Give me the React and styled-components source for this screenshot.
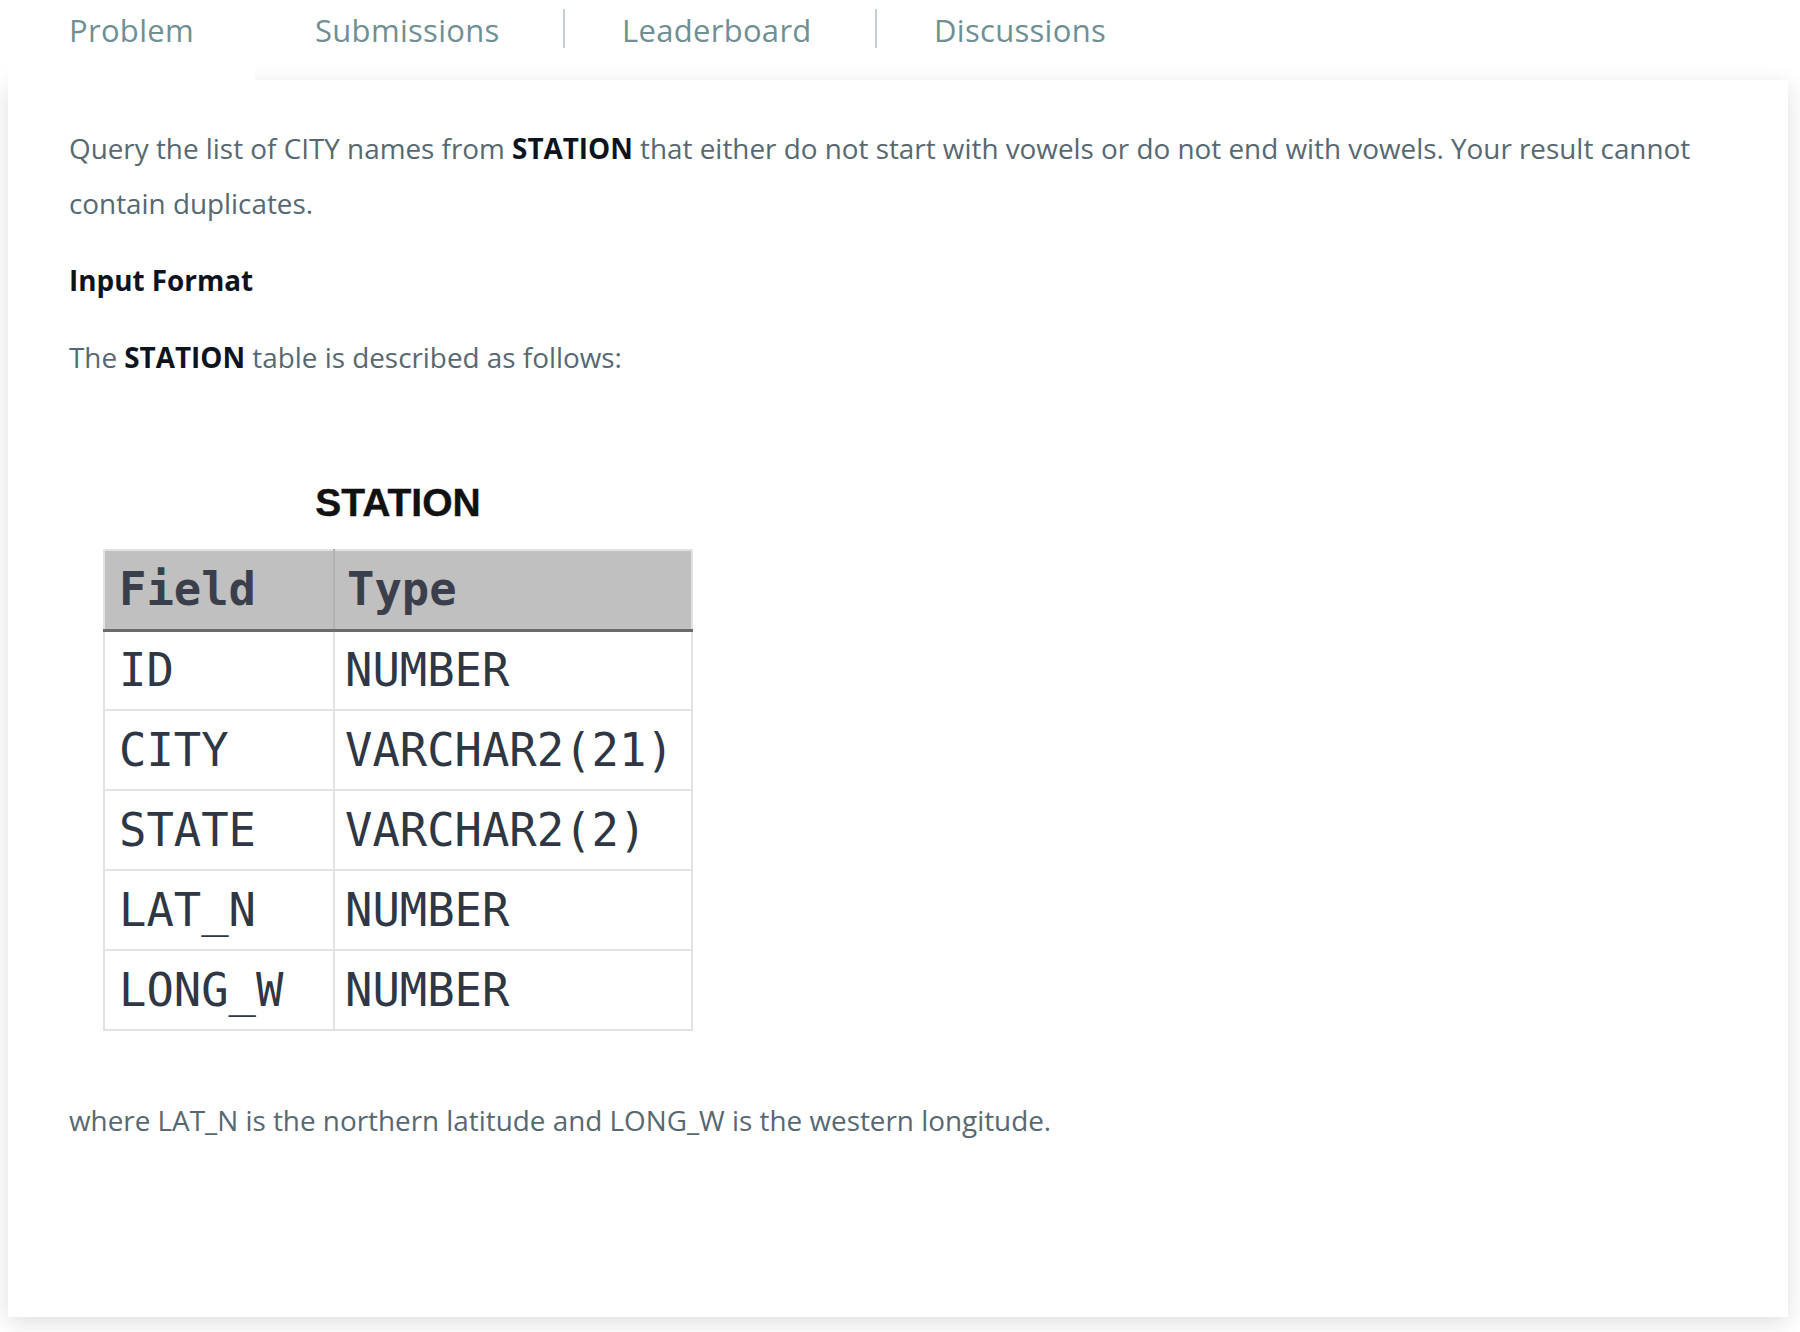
import React from "react";
import styled, { createGlobalStyle } from "styled-components";

const GlobalStyle = createGlobalStyle`
  html, body {
    margin: 0;
    padding: 0;
    background: #ffffff;
  }
  body {
    font-family: "Open Sans", "Noto Sans", sans-serif;
  }
`;

const Page = styled.div`
  width: 1780px;
  padding: 0 0 15px 8px;
`;

const TabBar = styled.div`
  display: flex;
  align-items: stretch;
  height: 80px;
`;

const Tab = styled.div`
  position: relative;
  z-index: ${props => (props.active ? 2 : 0)};
  display: flex;
  align-items: flex-start;
  padding: 9px 0 0 ${props => props.padLeft}px;
  width: ${props => props.width}px;
  box-sizing: border-box;
  background: ${props => (props.active ? "#ffffff" : "transparent")};
  font-size: 31px;
  color: #6f8f95;
  letter-spacing: 0.3px;
`;

const Divider = styled.span`
  align-self: flex-start;
  margin-top: 9px;
  width: 2px;
  height: 39px;
  background: #c2d0d4;
`;

const Card = styled.div`
  position: relative;
  z-index: 1;
  background: #ffffff;
  box-shadow: 0 6px 22px rgba(0, 0, 0, 0.13);
  padding: 41px 60px 0 61px;
  height: 1237px;
  box-sizing: border-box;
  color: #576871;
  font-size: 27.85px;
`;

const Para = styled.p`
  margin: ${props => props.top || 0}px 0 ${props => props.gap || 0}px;
  line-height: 55px;
  b {
    color: #0e141e;
    font-weight: 700;
  }
`;

const Heading = styled.h3`
  margin: 0 0 22px;
  font-size: 27.85px;
  line-height: 55px;
  font-weight: 700;
  color: #0e141e;
`;

const Figure = styled.div`
  display: flex;
  flex-direction: column;
  align-items: center;
  width: 590px;
  margin: 0 0 0 34px;
`;

const FigureTitle = styled.div`
  font-family: "Liberation Sans", Arial, sans-serif;
  font-weight: 700;
  font-size: 39px;
  line-height: 46px;
  color: #111111;
  margin-bottom: 23px;
  -webkit-text-stroke: 0.4px #111111;
`;

const Table = styled.table`
  width: 590px;
  table-layout: fixed;
  border-collapse: collapse;
  font-family: "DejaVu Sans Mono", "Liberation Mono", monospace;
  font-size: 45.5px;
  color: #2f3644;
  border: 2px solid #e2e2e2;
  th, td {
    box-sizing: border-box;
  }
`;

const HeadCell = styled.th`
  background: #bfc0bf;
  border-bottom: 3px solid #6b6b6b;
  border-left: 2px solid #b2b2b2;
  font-weight: 700;
  color: #3a3f4b;
  text-align: left;
  height: 80px;
  padding: 0 0 0 ${props => props.pad}px;
  width: ${props => (props.width ? `${props.width}px` : "auto")};
  &:first-child {
    border-left: none;
  }
`;

const Cell = styled.td`
  height: 80px;
  padding: 0 0 0 ${props => props.pad}px;
  border-top: 2px solid #e4e4e4;
  border-left: 2px solid #e4e4e4;
  white-space: nowrap;
  &:first-child {
    border-left: none;
  }
`;

const rows = [
  ["ID", "NUMBER"],
  ["CITY", "VARCHAR2(21)"],
  ["STATE", "VARCHAR2(2)"],
  ["LAT_N", "NUMBER"],
  ["LONG_W", "NUMBER"]
];

const tabs = [
  { label: "Problem", width: 247, pad: 61, active: true },
  { label: "Submissions", width: 308, pad: 60 },
  { label: "Leaderboard", width: 310, pad: 57 },
  { label: "Discussions", width: 340, pad: 57 }
];

export default function App() {
  return (
    <Page>
      <GlobalStyle />
      <TabBar>
        {tabs.map((t, i) => (
          <React.Fragment key={t.label}>
            {i > 1 && <Divider />}
            <Tab active={t.active} width={t.width} padLeft={t.pad}>
              {t.label}
            </Tab>
          </React.Fragment>
        ))}
      </TabBar>
      <Card>
        <Para gap={22}>
          Query the list of CITY names from <b>STATION</b> that either do not
          start with vowels or do not end with vowels. Your result cannot
          contain duplicates.
        </Para>
        <Heading>Input Format</Heading>
        <Para gap={95}>
          The <b>STATION</b> table is described as follows:
        </Para>
        <Figure>
          <FigureTitle>STATION</FigureTitle>
          <Table>
            <thead>
              <tr>
                <HeadCell width={230} pad={14}>Field</HeadCell>
                <HeadCell pad={12}>Type</HeadCell>
              </tr>
            </thead>
            <tbody>
              {rows.map(([field, type]) => (
                <tr key={field}>
                  <Cell pad={14}>{field}</Cell>
                  <Cell pad={10}>{type}</Cell>
                </tr>
              ))}
            </tbody>
          </Table>
        </Figure>
        <Para top={62}>
          where LAT_N is the northern latitude and LONG_W is the western
          longitude.
        </Para>
      </Card>
    </Page>
  );
}
